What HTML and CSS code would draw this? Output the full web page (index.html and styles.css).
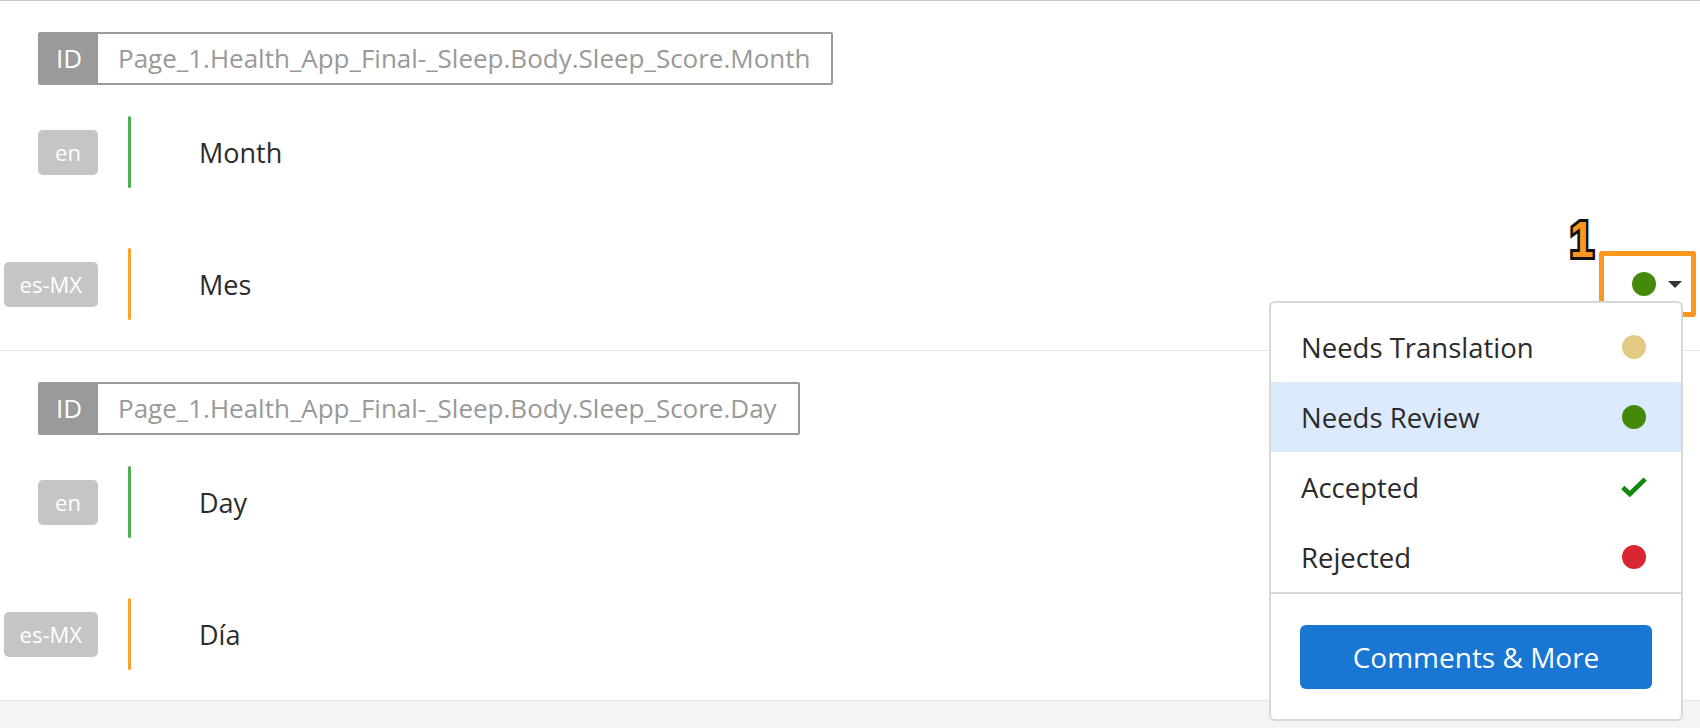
FILE: index.html
```html
<!DOCTYPE html>
<html lang="en">
<head>
<meta charset="utf-8">
<title>Strings</title>
<link rel="stylesheet" href="styles.css">
</head>
<body>
<div class="page">
  <section class="entry">
    <div class="idbox"><span class="idlabel">ID</span><span class="idvalue">Page_1.Health_App_Final-_Sleep.Body.Sleep_Score.Month</span></div>
    <div class="row">
      <div class="badgecol"><span class="badge">en</span></div>
      <div class="bar bar-green"></div>
      <div class="text">Month</div>
    </div>
    <div class="row row-second">
      <div class="badgecol"><span class="badge">es-MX</span></div>
      <div class="bar bar-orange"></div>
      <div class="text">Mes</div>
      <div class="status">
        <span class="dot dot-review"></span>
        <span class="caret"></span>
        <div class="callout"></div>
        <span class="callout-num">1</span>
        <div class="menu">
          <div class="menu-item"><span>Needs Translation</span><span class="icon"><span class="dot dot-translate"></span></span></div>
          <div class="menu-item active"><span>Needs Review</span><span class="icon"><span class="dot dot-review"></span></span></div>
          <div class="menu-item"><span>Accepted</span><span class="icon"><svg width="30" height="24" viewBox="0 0 30 24"><polyline points="3,12.5 10.5,19.5 27,3.5" fill="none" stroke="#12880c" stroke-width="5" stroke-linecap="butt" stroke-linejoin="miter"/></svg></span></div>
          <div class="menu-item"><span>Rejected</span><span class="icon"><span class="dot dot-rejected"></span></span></div>
          <div class="menu-footer"><button class="menu-button">Comments &amp; More</button></div>
        </div>
      </div>
    </div>
  </section>
  <section class="entry">
    <div class="idbox"><span class="idlabel">ID</span><span class="idvalue">Page_1.Health_App_Final-_Sleep.Body.Sleep_Score.Day</span></div>
    <div class="row">
      <div class="badgecol"><span class="badge">en</span></div>
      <div class="bar bar-green"></div>
      <div class="text">Day</div>
    </div>
    <div class="row row-second">
      <div class="badgecol"><span class="badge">es-MX</span></div>
      <div class="bar bar-orange"></div>
      <div class="text">Día</div>
    </div>
  </section>
</div>
</body>
</html>
```
FILE: styles.css
```css
html, body {
  margin: 0;
  padding: 0;
  height: 100%;
}
body {
  background: #f4f4f4;
  font-family: "Open Sans", "Noto Sans", sans-serif;
  color: #333;
  overflow: hidden;
}
.page {
  background: #fff;
  border-top: 1px solid #c8c8c8;
}
.entry {
  padding: 31px 18px 30px 0;
  border-bottom: 1px solid #e6e6e6;
}
.idbox {
  display: flex;
  width: max-content;
  height: 53px;
  box-sizing: border-box;
  margin-left: 38px;
  border: 2px solid #9a9a9a;
  border-radius: 2px;
}
.idlabel {
  width: 58px;
  background: #9a9a9a;
  color: #fff;
  font-size: 26px;
  line-height: 49px;
  text-align: center;
}
.idvalue {
  padding: 0 21px 0 20px;
  color: #999;
  font-size: 26px;
  line-height: 49px;
  white-space: nowrap;
}
.row {
  display: flex;
  align-items: center;
  height: 72px;
  margin-top: 31px;
}
.row-second {
  margin-top: 60px;
}
.badgecol {
  width: 98px;
  display: flex;
  justify-content: flex-end;
}
.badge {
  min-width: 60px;
  height: 45px;
  box-sizing: border-box;
  padding: 0 16px;
  background: #c5c5c5;
  color: #fff;
  border-radius: 5px;
  font-size: 22px;
  line-height: 45px;
  text-align: center;
}
.bar {
  width: 3px;
  height: 72px;
  margin-left: 30px;
  border-radius: 1.5px;
}
.bar-green { background: #4caf50; }
.bar-orange { background: #f5a42a; }
.text {
  margin-left: 68px;
  font-size: 27px;
  color: #2b2b2b;
}
.status {
  margin-left: auto;
  display: flex;
  align-items: center;
  gap: 12px;
  position: relative;
  height: 24px;
}
.dot {
  display: block;
  width: 24px;
  height: 24px;
  border-radius: 50%;
}
.dot-review { background: #45890b; }
.dot-translate { background: #e3cb86; }
.dot-rejected { background: #d92732; }
.caret {
  width: 0;
  height: 0;
  border-left: 7px solid transparent;
  border-right: 7px solid transparent;
  border-top: 7px solid #333;
  margin-top: 1px;
}
.callout {
  position: absolute;
  left: -33px;
  right: -14px;
  top: -21px;
  bottom: -21px;
  border: 5px solid #fb961f;
  border-radius: 3px;
  pointer-events: none;
}
.callout-num {
  position: absolute;
  left: -62px;
  top: -57px;
  font-family: "Liberation Sans", Arial, sans-serif;
  font-weight: bold;
  font-size: 50px;
  line-height: 50px;
  color: #fb961f;
  -webkit-text-stroke: 6px #111;
  paint-order: stroke fill;
  transform: scaleX(0.85);
  transform-origin: left top;
}
.menu {
  position: absolute;
  right: -1px;
  top: calc(100% + 5px);
  width: 414px;
  box-sizing: border-box;
  background: #fff;
  border: 2px solid #d8d8d8;
  border-radius: 6px;
  padding-top: 9px;
  z-index: 2;
}
.menu-item {
  height: 70px;
  display: flex;
  align-items: center;
  justify-content: space-between;
  padding: 0 33px 0 30px;
  font-size: 27.5px;
  color: #2b2b2b;
}
.menu-item.active {
  background: #dbeafc;
}
.icon {
  width: 28px;
  display: flex;
  justify-content: center;
  align-items: center;
}
.menu-footer {
  border-top: 2px solid #d8d8d8;
  padding: 31px 29px 30px 29px;
}
.menu-button {
  display: block;
  width: 100%;
  height: 64px;
  border: none;
  border-radius: 6px;
  background: #1976d2;
  color: #fff;
  font-family: "Open Sans", "Noto Sans", sans-serif;
  font-size: 28px;
}
```
